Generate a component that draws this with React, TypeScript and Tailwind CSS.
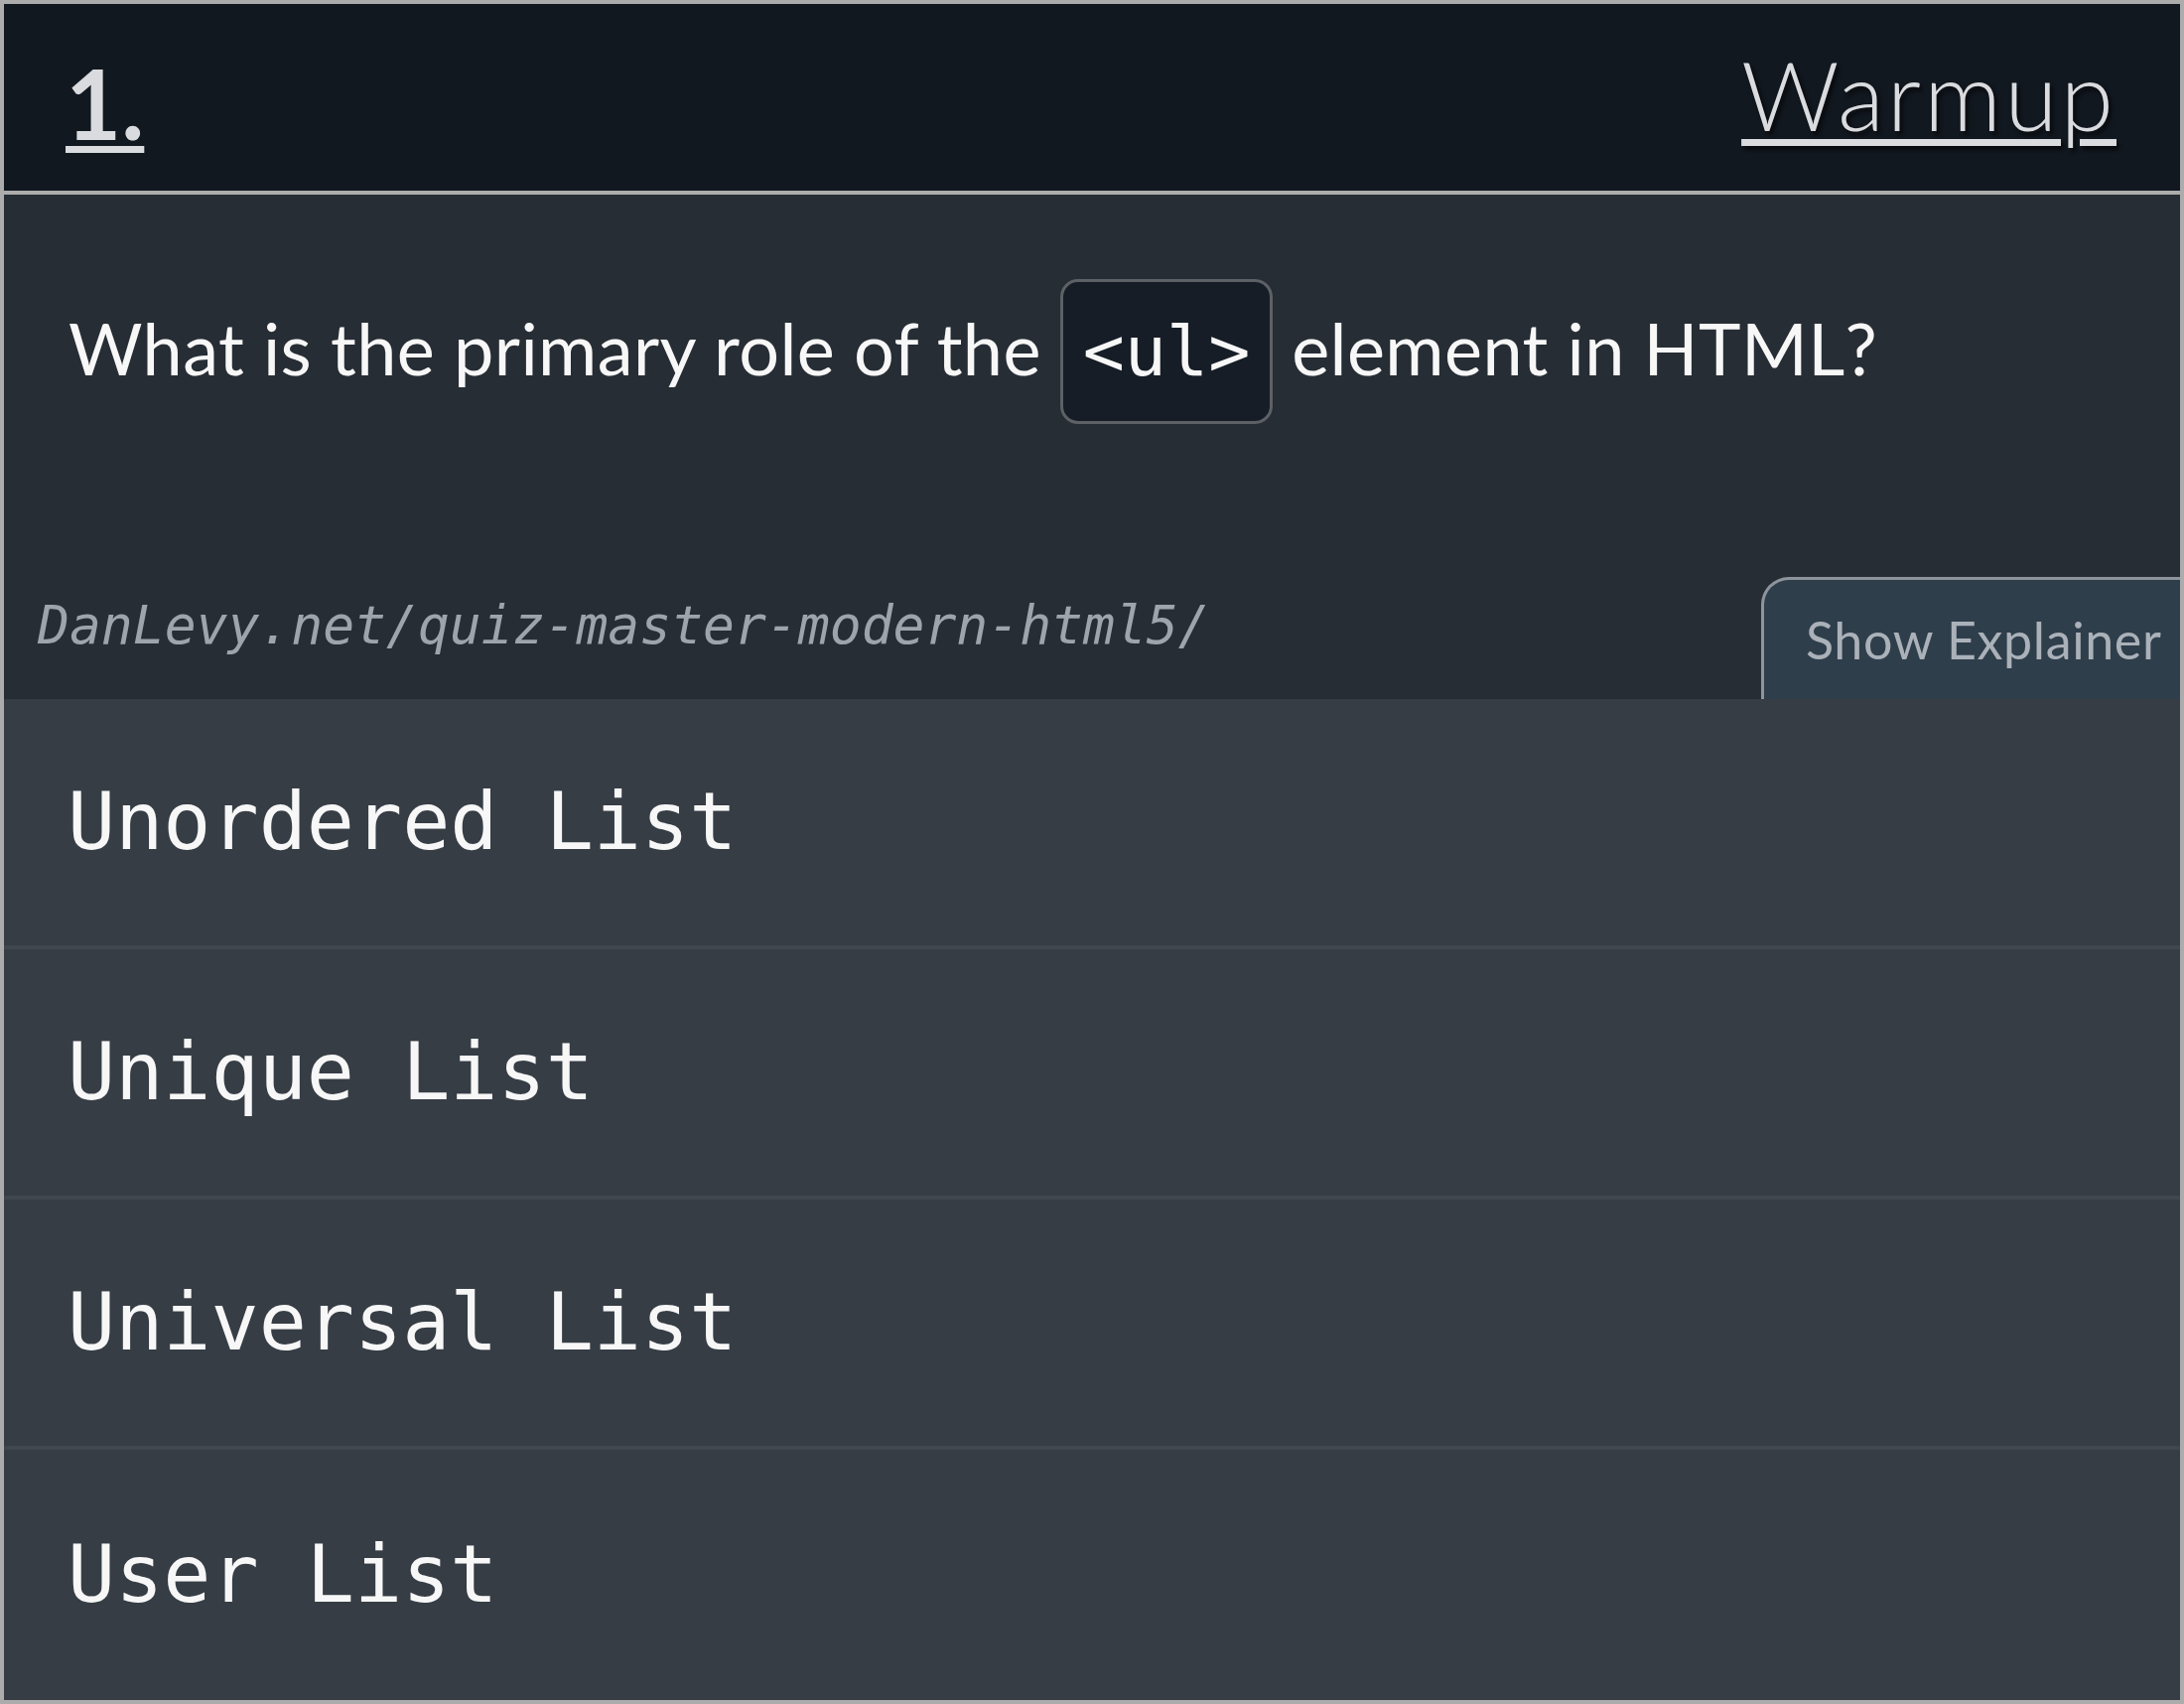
const answers = ['Unordered List', 'Unique List', 'Universal List', 'User List'];

const sans = "font-['Lato','Noto_Sans',sans-serif]";
const mono = "font-['DejaVu_Sans_Mono','Liberation_Mono',monospace]";

export default function App() {
  return (
    <div className="w-[2200px] h-[1716px] border-4 border-[#acacac] bg-[#272d34] flex flex-col overflow-hidden">
      {/* Header */}
      <div className={`h-[192px] shrink-0 bg-[#121820] border-b-4 border-[#acacac] flex items-start justify-between pl-[62px] pr-[64px] text-[#d9dbde] ${sans}`}>
        <span className="mt-[51px] text-[97px] leading-none font-bold underline decoration-[7px] underline-offset-[6px]">
          1.
        </span>
        <span className="mt-[42px] text-[97px] leading-none font-light tracking-[3px] underline decoration-[7px] underline-offset-[8px] [text-shadow:3px_4px_4px_rgba(0,0,0,0.6)]">
          Warmup
        </span>
      </div>

      {/* Question */}
      <div className="h-[508px] shrink-0 bg-[#272d34] flex flex-col justify-between">
        <p className={`pt-[85px] pl-[65px] text-[72px] tracking-[0.4px] text-[#f7f7f7] ${sans}`}>
          What is the primary role of the{' '}
          <code className={`inline-block px-[20px] py-[28px] leading-[1.2] tracking-normal text-[70px] font-light bg-[#161d26] border-[3px] border-[#5d6166] rounded-[18px] ${mono}`}>
            &lt;ul&gt;
          </code>{' '}
          element in HTML?
        </p>
        <div className="flex items-end justify-between">
          <span className={`mb-[48px] pl-[34px] text-[53px] leading-none italic text-[#9ea4ab] ${mono}`}>
            DanLevy.net/quiz-master-modern-html5/
          </span>
          <button className={`h-[123px] w-[422px] pl-[42px] text-left tracking-[0.6px] bg-[#2f3e4b] border-l-[3px] border-t-[3px] border-[#8d949c] rounded-tl-[28px] text-[52px] text-[#aab1b9] ${sans}`}>
            Show Explainer
          </button>
        </div>
      </div>

      {/* Answers */}
      <div className="flex-1 flex flex-col bg-[#363d45]">
        {answers.map((a, i) => (
          <div
            key={a}
            className={`flex items-center pl-[64px] bg-[#363d45] ${i < answers.length - 1 ? 'h-[252px] border-b-4 border-[#40474e]' : 'flex-1'}`}
          >
            <span className={`text-[80px] leading-none text-[#f7f7f7] ${mono}`}>{a}</span>
          </div>
        ))}
      </div>
    </div>
  );
}
